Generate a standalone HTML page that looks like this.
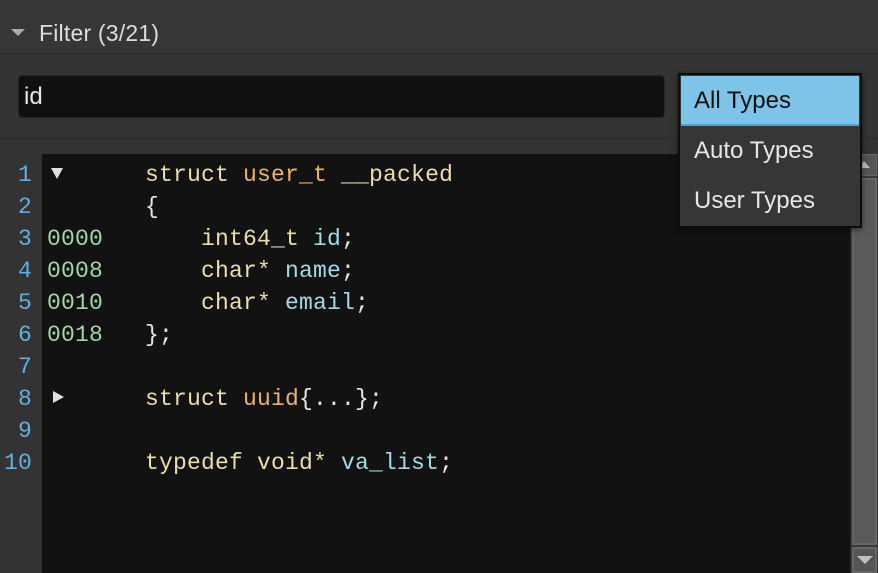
<!DOCTYPE html><html><head><style>
*{margin:0;padding:0;box-sizing:border-box}
body{width:878px;height:573px;background:#333;overflow:hidden;position:relative;font-family:"Liberation Sans",sans-serif}
.a{position:absolute}
.code{font-family:"Liberation Mono",monospace;font-size:23px;line-height:32px;white-space:pre;letter-spacing:0.2px}
.k{color:#eddcae}.o{color:#e9b56e}.b{color:#a6d8e6}.w{color:#e6e6e6}
</style></head><body>
<div class="a" style="left:0;top:0;width:878px;height:54px;background:#363636;border-bottom:1px solid #2a2a2a"></div>
<div class="a" style="left:11px;top:29px;width:0;height:0;border-left:7px solid transparent;border-right:7px solid transparent;border-top:7px solid #aaa"></div>
<div class="a" style="left:39px;top:20px;font-size:23px;color:#ddd;letter-spacing:0.2px">Filter (3/21)</div>
<div class="a" style="left:0;top:55px;width:878px;height:83px;background:#343434;border-bottom:1px solid #2a2a2a"></div>
<div class="a" style="left:18px;top:75px;width:647px;height:43px;background:#101010;border:1px solid #262626;border-radius:4px"></div>
<div class="a" style="left:24px;top:83px;font-size:24px;color:#e8e8e8">id</div>
<div class="a" style="left:42px;top:154px;width:808px;height:419px;background:#121212"></div>
<div class="a code" style="left:0;top:159px;width:32px;text-align:right;color:#5fb0e0">1
2
3
4
5
6
7
8
9
10</div>
<div class="a code" style="left:47px;top:159px;color:#9fd8a4">

0000
0008
0010
0018</div>
<div class="a" style="left:51px;top:168px;border-left:6px solid transparent;border-right:6px solid transparent;border-top:11px solid #e0e0e0"></div>
<div class="a" style="left:53px;top:391px;border-top:6px solid transparent;border-bottom:6px solid transparent;border-left:11px solid #e0e0e0"></div>
<div class="a code" style="left:145px;top:159px"><span class="k">struct </span><span class="o">user_t</span><span class="k"> __packed</span>
<span class="w">{</span>
<span class="k">    int64_t </span><span class="b">id</span><span class="w">;</span>
<span class="k">    char* </span><span class="b">name</span><span class="w">;</span>
<span class="k">    char* </span><span class="b">email</span><span class="w">;</span>
<span class="w">};</span>

<span class="k">struct </span><span class="o">uuid</span><span class="w">{...};</span>

<span class="k">typedef void* </span><span class="b">va_list</span><span class="w">;</span></div>
<div class="a" style="left:850px;top:154px;width:28px;height:419px;background:#3a3a3a;border-left:1px solid #2a2a2a"></div>
<div class="a" style="left:852px;top:154px;width:25px;height:22px;background:#555;border:1px solid #666"></div>
<div class="a" style="left:858px;top:161px;border-left:6px solid transparent;border-right:6px solid transparent;border-bottom:7px solid #bbb"></div>
<div class="a" style="left:852px;top:178px;width:25px;height:367px;background:#5a5a5a;border:2px solid #666"></div>
<div class="a" style="left:852px;top:547px;width:25px;height:26px;background:#555;border:2px solid #666"></div>
<div class="a" style="left:857px;top:556px;border-left:8px solid transparent;border-right:8px solid transparent;border-top:8px solid #c0c0c0"></div>
<div class="a" style="left:678px;top:73px;width:184px;height:155px;background:#363636;border:2px solid #0c0c0c;box-shadow:0 2px 6px rgba(0,0,0,.5)"></div>
<div class="a" style="left:681px;top:76px;width:178px;height:50px;background:#7dc4e8;border-bottom:2px solid #5a9fc4"></div>
<div class="a" style="left:694px;top:87px;font-size:24px;color:#111">All Types</div>
<div class="a" style="left:694px;top:137px;font-size:24px;color:#e6e6e6">Auto Types</div>
<div class="a" style="left:694px;top:187px;font-size:24px;color:#e6e6e6">User Types</div>
</body></html>
